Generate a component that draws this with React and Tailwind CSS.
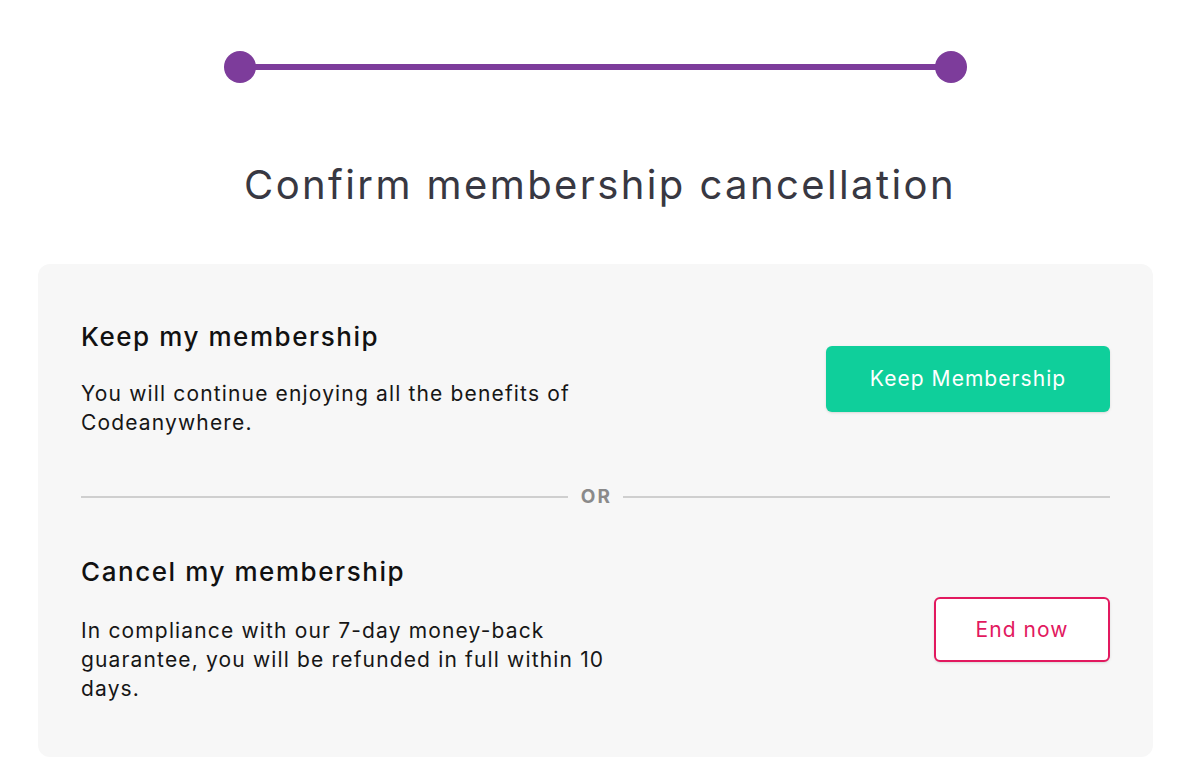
import React from 'react';

const Section = ({ title, text, gap, children }) => (
  <div className="flex items-center justify-between">
    <div className="w-[550px]">
      <h2 className="text-[26px] leading-[32px] font-medium tracking-[0.06em] text-[#111]">{title}</h2>
      <p className={`${gap} text-[21px] leading-[29px] tracking-[0.055em] text-[#161616]`}>{text}</p>
    </div>
    {children}
  </div>
);

export default function App() {
  return (
    <div className="w-[1200px] h-[758px] bg-white overflow-hidden" style={{ fontFamily: 'Inter, "Noto Sans", sans-serif' }}>
      <div className="flex items-center pt-[51px] ml-[224px] w-[743px]">
        <span className="w-[32px] h-[32px] rounded-full bg-[#7d3c9b] shrink-0" />
        <span className="flex-1 h-[6px] bg-[#7d3c9b] -mx-[2px]" />
        <span className="w-[32px] h-[32px] rounded-full bg-[#7d3c9b] shrink-0" />
      </div>

      <h1 className="mt-[78px] text-center text-[40px] leading-[48px] tracking-[0.06em] text-[#383842]">
        Confirm membership cancellation
      </h1>

      <div className="mt-[55px] mx-[38px] w-[1115px] bg-[#f7f7f7] rounded-[12px] px-[43px] pt-[57px] pb-[54px]">
        <Section
          title="Keep my membership"
          gap="mt-[26px]"
          text="You will continue enjoying all the benefits of Codeanywhere."
        >
          <button className="w-[284px] h-[66px] rounded-[6px] bg-[#0fcf9b] text-white text-[21px] tracking-[0.05em] shadow-sm">
            Keep Membership
          </button>
        </Section>

        <div className="flex items-center gap-[11px] mt-[48px] mb-[47px] h-[24px]">
          <span className="flex-1 h-[2px] bg-[#cfcfcf]" />
          <span className="text-[19px] leading-[24px] font-bold text-[#8a8a8a] tracking-[0.12em] pl-[2px]">OR</span>
          <span className="flex-1 h-[2px] bg-[#cfcfcf]" />
        </div>

        <Section
          title="Cancel my membership"
          gap="mt-[28px]"
          text="In compliance with our 7-day money-back guarantee, you will be refunded in full within 10 days."
        >
          <button className="w-[176px] h-[65px] rounded-[6px] bg-white border-2 border-[#e2195f] text-[#e2195f] text-[21px] tracking-[0.05em] shadow-sm">
            End now
          </button>
        </Section>
      </div>
    </div>
  );
}
